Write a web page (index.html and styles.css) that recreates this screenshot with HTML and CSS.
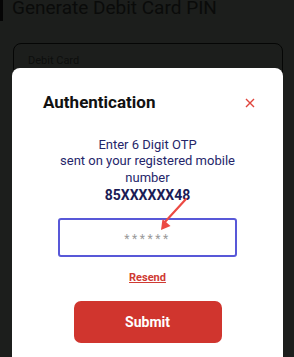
FILE: index.html
```html
<!DOCTYPE html>
<html>
    <head>
        <link rel="stylesheet" href="styles.css">
    </head>
    <body>
        <div class="page">
            <div class="header">
                <span class="bar"></span>
                <h2>Generate Debit Card PIN</h2>
            </div>
            <div class="field">
                <span>Debit Card</span>
            </div>
        </div>

        <div class="modal">
            <div class="modal-head">
                <h1>Authentication</h1>
                <svg class="close" width="10" height="10" viewBox="0 0 10 10">
                    <path d="M1 1L9 9M9 1L1 9" stroke="#e0443c" stroke-width="1.4"/>
                </svg>
            </div>
            <p class="info">Enter 6 Digit OTP<br>sent on your registered mobile<br>number</p>
            <p class="mobile">85XXXXXX48</p>
            <div class="otp">
                <span>******</span>
                <svg class="arrow" width="34" height="36" viewBox="0 0 34 36">
                    <path d="M31 2L9 26" stroke="#ec4a43" stroke-width="2.2" stroke-linecap="round"/>
                    <path d="M6 33L7.5 22L15.5 29Z" fill="#ec4a43"/>
                </svg>
            </div>
            <a class="resend" href="#">Resend</a>
            <button class="submit">Submit</button>
        </div>
    </body>
</html>
```

FILE: styles.css
```css
body{
    margin:0;
    background-color: #1c1e1c;
    font-family: Roboto, "Liberation Sans", sans-serif;
    width:294px;
    height:357px;
    overflow:hidden;
    position:relative;
}
.header{
    display:flex;
    align-items:flex-start;
    height:20px;
}
.bar{
    width:3px;
    height:21px;
    background-color:#050505;
}
.header h2{
    margin:0 0 0 9px;
    font-size:19px;
    font-weight:400;
    line-height:16px;
    color:#0a0b0a;
}
.field{
    margin:23px 11px 0 13px;
    height:60px;
    border:1px solid #050605;
    border-radius:8px;
    padding:5px 14px;
}
.field span{
    font-size:11px;
    color:#0d0e0d;
}

/* popup over the page */
.modal{
    position:absolute;
    left:12px;
    top:68px;
    width:271px;
    height:300px;
    background-color:white;
    border-radius:8px;
    display:flex;
    flex-direction:column;
    align-items:center;
}
.modal-head{
    width:100%;
    display:flex;
    justify-content:space-between;
    align-items:center;
    padding:24px 28px 0 31px;
    box-sizing:border-box;
}
.modal-head h1{
    margin:0;
    font-size:17px;
    font-weight:700;
    color:#111;
}
.close{
    margin-top:1px;
}
.info{
    margin:25px 0 0;
    text-align:center;
    font-size:13px;
    line-height:16.3px;
    color:#25266a;
}
.mobile{
    margin:1px 0 0;
    font-size:14px;
    font-weight:700;
    color:#1a1b55;
}
.otp{
    position:relative;
    margin-top:15px;
    width:175px;
    height:35px;
    border:2px solid #5858d8;
    border-radius:3px;
    display:flex;
    justify-content:center;
    align-items:center;
}
.otp span{
    font-size:12px;
    letter-spacing:2.6px;
    color:#9a9a9a;
    margin-top:4px;
}
.arrow{
    position:absolute;
    left:95px;
    top:-23px;
}
.resend{
    margin-top:14px;
    font-size:11px;
    font-weight:700;
    color:#cf3a33;
}
.submit{
    margin-top:17px;
    width:148px;
    height:42px;
    border:none;
    border-radius:7px;
    background-color:#d0352e;
    color:white;
    font-family:Roboto, "Liberation Sans", sans-serif;
    font-size:14px;
    font-weight:700;
}
```
